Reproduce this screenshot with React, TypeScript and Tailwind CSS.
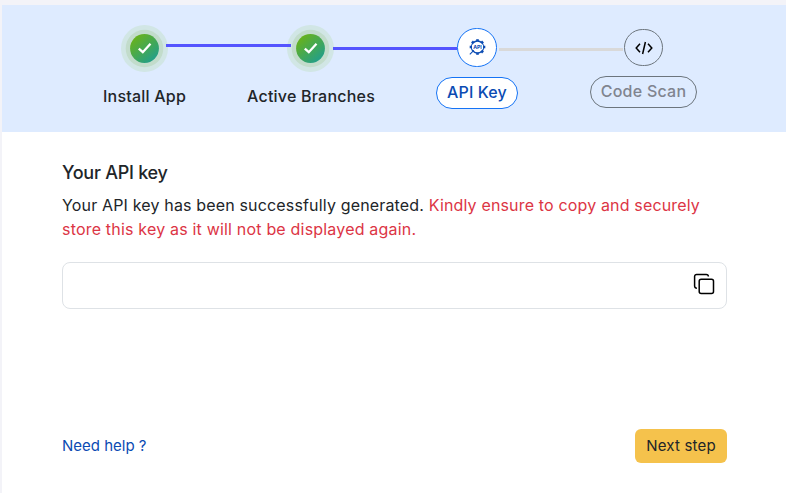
import React from "react";

function DoneMark({ id, className }: { id: string; className: string }) {
  return (
    <svg viewBox="0 0 47 47" className={`h-[47px] w-[47px] shrink-0 ${className}`}>
      <defs>
        <linearGradient id={id} x1="0.15" y1="0.1" x2="0.85" y2="0.95">
          <stop offset="0" stopColor="#68b21b" />
          <stop offset="1" stopColor="#1f9e8e" />
        </linearGradient>
      </defs>
      <circle cx="23.5" cy="23.5" r="23.5" fill="#d1e6e5" />
      <circle cx="23.5" cy="23.5" r="18.8" fill="#c2dccb" />
      <circle cx="23.5" cy="23.5" r="14.4" fill={`url(#${id})`} />
      <path d="M17.8 23.6l4 3.6 7.7-8.4" fill="none" stroke="#fff" strokeWidth="2.3" />
    </svg>
  );
}

function ApiGear() {
  const teeth = [0, 45, 90, 135, 180, 270, 315];
  return (
    <svg viewBox="0 0 18 18" className="mb-px h-[18px] w-[18px]" fill="none" stroke="#0b4bb3">
      <circle cx="9.5" cy="9" r="6" strokeWidth="1.4" />
      {teeth.map((a) => (
        <path key={a} d="M8.2 2.2h2.6" strokeWidth="2" transform={`rotate(${a} 9.5 9)`} />
      ))}
      <path d="M1.8 16.3l4-4" strokeWidth="1.1" />
      <rect x="4" y="6.6" width="11" height="4.8" fill="#fff" stroke="none" />
      <text x="9.5" y="10.9" textAnchor="middle" fontSize="5.2" fontWeight="700" fill="#0b4bb3" stroke="none" className="font-['Inter',sans-serif]">
        API
      </text>
    </svg>
  );
}

export default function App() {
  return (
    <div className="h-[493px] w-[786px] overflow-hidden bg-[#f3f3f8] pt-[5px] pl-[2px] font-['Inter',sans-serif] text-[#212529]">
      <main className="h-full bg-white">
        <header className="h-[127px] bg-[#deebff] pt-5">
          <div className="flex h-[47px] items-start pl-[119px]">
            <DoneMark id="done-install" className="" />
            <div className="z-10 mt-[19px] -ml-[2px] h-[3px] w-[125px] bg-[#5454ff]" />
            <DoneMark id="done-branches" className="-ml-[3.6px]" />
            <div className="z-10 mt-[22px] -ml-[1.4px] h-[3px] w-[124px] bg-[#5454ff]" />
            <div className="mt-[3px] flex h-[39px] w-10 items-center justify-center rounded-full border border-[#1573f5] bg-white">
              <ApiGear />
            </div>
            <div className="mt-[23px] ml-[2px] h-[3px] w-[124px] bg-[#d9d9d9]" />
            <div className="mt-1 ml-[1px] flex h-[37px] w-[39px] items-center justify-center rounded-full border border-[#6c757d]">
              <svg viewBox="0 0 18 14" className="h-[14px] w-[18px]" fill="none" stroke="#000" strokeWidth="1.5">
                <path d="M5 2.7L1.2 7 5 11.3M13 2.7L16.8 7 13 11.3M10.4 1L7.6 13" />
              </svg>
            </div>
          </div>
          <div className="flex items-start pt-1 text-base leading-6 font-medium">
            <span className="mt-[8px] ml-[101px] w-[84px] tracking-[0.22px] whitespace-nowrap">Install App</span>
            <span className="mt-[8px] ml-[60px] w-[129px] tracking-[0.22px] whitespace-nowrap">Active Branches</span>
            <span className="mt-px ml-[60px] flex h-8 w-[82px] items-center justify-center rounded-full border border-[#1573f5] bg-white pb-[2px] tracking-[0.15px] whitespace-nowrap text-[#0b4bb3]">
              API Key
            </span>
            <span className="ml-[72px] flex h-8 w-[107px] items-center justify-center rounded-full border border-[#6c757d] pb-[2px] tracking-[0.25px] whitespace-nowrap text-[#80848f]">
              Code Scan
            </span>
          </div>
        </header>

        <section className="pt-[29px] pr-[59px] pl-[60px]">
          <h1 className="text-lg leading-6 font-medium tracking-[-0.25px]">Your API key</h1>
          <p className="mt-2 text-base leading-6 tracking-[0.16px] whitespace-nowrap">
            Your API key has been successfully generated.{" "}
            <span className="text-[#dc3545]">
              Kindly ensure to copy and securely
              <br />
              <span className="tracking-[0.19px]">store this key as it will not be displayed again.</span>
            </span>
          </p>
          <div className="mt-[21px] flex h-[47px] items-center justify-end rounded-lg border border-[#dee2e6] pr-[11px]">
            <svg viewBox="0 0 22 22" className="mb-[3px] h-[22px] w-[22px]" fill="none" stroke="#000" strokeWidth="1.5">
              <rect x="6.2" y="6.2" width="14.3" height="14.3" rx="2" />
              <path d="M3.9 15.2A2.2 2.2 0 0 1 1.6 13V3.4a2 2 0 0 1 2-2H13.2a2.2 2.2 0 0 1 2.2 2.2" />
            </svg>
          </div>
          <div className="mt-[120px] flex items-center justify-between text-[15px]">
            <a className="text-[#0b4bb3]">Need help ?</a>
            <button className="h-[34px] w-[92px] rounded-md bg-[#f5c24c] tracking-[0.2px] whitespace-nowrap">Next step</button>
          </div>
        </section>
      </main>
    </div>
  );
}
